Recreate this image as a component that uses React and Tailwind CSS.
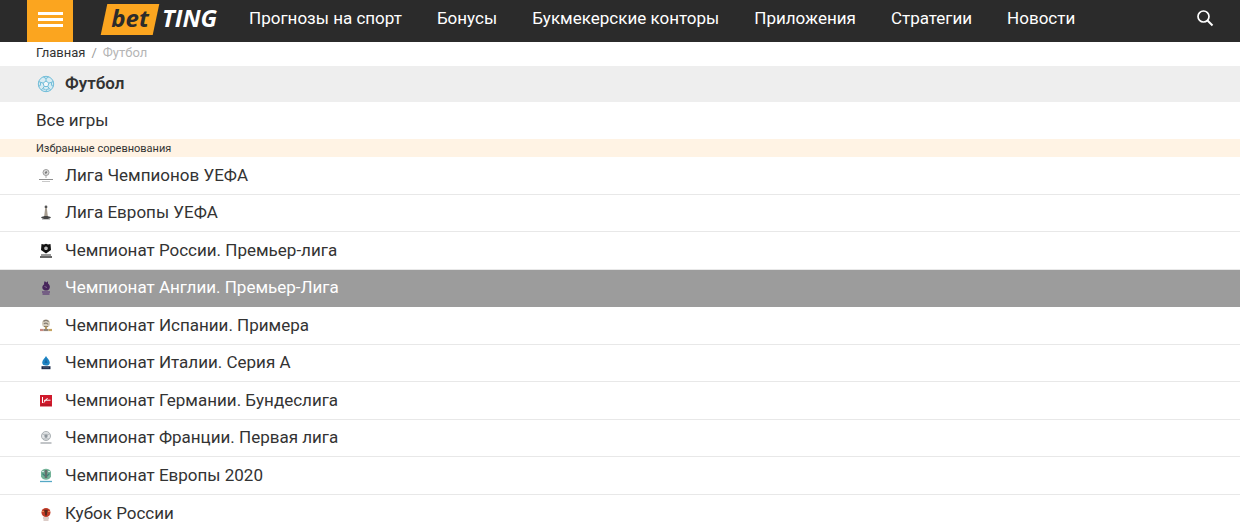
const navLinks = [
  'Прогнозы на спорт',
  'Бонусы',
  'Букмекерские конторы',
  'Приложения',
  'Стратегии',
  'Новости',
];

const ChampionsIcon = () => (
  <>
    <circle cx="8" cy="4.5" r="3" fill="#e0e0e0" stroke="#949494" strokeWidth="0.9" />
    <path d="M6.5 5 8 3l1.5 1L8 6z" fill="#777" />
    <path d="M8 7.5v2.5" stroke="#aaa" />
    <path d="M1 11.5h14" stroke="#8f8f8f" />
    <path d="M4 13.5h8" stroke="#c8c8c8" />
  </>
);

const EuropaIcon = () => (
  <>
    <circle cx="8" cy="2" r="1.4" fill="#555" />
    <path d="M7.2 3h1.6l1 8H6.2z" fill="#a69c8f" />
    <path d="M3 12.5c2-2 8-2 10 0-2 2-8 2-10 0z" fill="#444" />
    <path d="M4 14.5h8" stroke="#bbb" strokeWidth="0.8" />
  </>
);

const RussiaIcon = () => (
  <>
    <path d="M3.5 1 6 1.6 8 .8l2 .8 2.500-.6.5 6L8 10.500 3 7z" fill="#111" />
    <path d="m8 3.300 2 1.500-.8 2.200H6.800L6 4.800z" fill="#bbb" />
    <path d="M3 12h10" stroke="#555" strokeWidth="1.200" />
    <path d="M2 14h12" stroke="#333" strokeWidth="1.500" />
  </>
);

const EnglandIcon = () => (
  <>
    <path
      d="M6 3 6.800 1l1.400 1.400L10 1.200v2.300c1.700 1.200 2.200 3 1.700 4.500-.6 2-2 2.600-3.600 2.600S4.300 9.700 4.300 7.500C4.300 6 5 5 6.200 4.200z"
      fill="#46245a"
    />
    <path d="M6.500 6.500 9 7.500" stroke="#8d7a99" strokeWidth="0.8" />
    <path d="M4 12h8M4.500 14h7" stroke="#674b7c" strokeWidth="1.300" />
  </>
);

const SpainIcon = () => (
  <>
    <circle cx="8" cy="5.500" r="4" fill="#d5cdbd" />
    <path d="M5.500 3.500c1.500-1.800 4-1.500 5 .3M5.800 5.800c1.500-.8 3.500-.5 4.400.7M6 8.500h4" fill="none" stroke="#857c72" strokeWidth="1.200" />
    <path d="M8 8.500V11" stroke="#b9924f" strokeWidth="1.800" />
    <path d="M2 12h3.500" stroke="#c98a80" strokeWidth="2.200" />
    <path d="M5.500 12h5" stroke="#8f8479" strokeWidth="2.200" />
    <path d="M10.500 12H14" stroke="#c6a562" strokeWidth="2.200" />
  </>
);

const ItalyIcon = () => (
  <>
    <path d="M8 1c.8 2 3.800 4 3.800 6.500s-1.800 3-3.800 3-3.800-.6-3.800-3S7.200 3 8 1z" fill="#1d84c4" />
    <path d="M8 3.500 9.500 8h-3z" fill="#1765a3" />
    <path d="M3.500 11.200h9v3h-9z" fill="#1d2b49" />
    <path d="M5 12.700h6" stroke="#5f6d8a" strokeWidth="0.6" />
  </>
);

const GermanyIcon = () => (
  <>
    <path d="M2 2h12v11.500H2z" fill="#d01a2c" />
    <path d="M4.500 4v6" stroke="#fff" />
    <path d="m6 7.500 2-.5 1.500-2M7.500 7.200h5M7.500 7.500l-1.800 2.300" fill="none" stroke="#fff" />
    <path d="M3 12h10" stroke="#a01523" />
  </>
);

const FranceIcon = () => (
  <>
    <circle cx="8" cy="6" r="4.500" fill="#e4e6e8" stroke="#a3a9ad" strokeWidth="0.9" />
    <path d="m8 4.300 1.800 1.300-.7 2.100H6.900l-.7-2.100z" fill="#8d959b" />
    <path d="M4.500 4.300h7M5 8.900h6" stroke="#a3a9ad" strokeWidth="0.8" />
    <path d="M2.500 13h11" stroke="#a8adb0" strokeWidth="1.400" />
  </>
);

const EuroIcon = () => (
  <>
    <path d="M3 4a5.500 5.500 0 0 1 10 0v4.500a5.500 5.500 0 0 1-10 0z" fill="#74b398" />
    <path d="M8 2v8" stroke="#65706c" strokeWidth="2.500" />
    <path d="M4.500 5.500 7 8M11.500 5.500 9 8" stroke="#3d837a" strokeWidth="1.200" />
    <path d="M4 3.500h2M10 3.500h2" stroke="#d5e5e3" />
    <path d="M2 13.500h12" stroke="#55a8c5" strokeWidth="1.300" />
  </>
);

const CupIcon = () => (
  <>
    <circle cx="8" cy="6.500" r="4.500" fill="#c23a26" />
    <path d="M6.200 3.800h3.600L9 7.500v2H7v-2z" fill="#57281b" />
    <path d="M4.300 5.500h1.500M10.200 5.500h1.500" stroke="#eba05e" />
    <path d="M5 12h6M5.500 14h5" stroke="#b9998f" strokeWidth="1.200" />
  </>
);

const competitions = [
  { name: 'Лига Чемпионов УЕФА', icon: ChampionsIcon },
  { name: 'Лига Европы УЕФА', icon: EuropaIcon },
  { name: 'Чемпионат России. Премьер-лига', icon: RussiaIcon },
  { name: 'Чемпионат Англии. Премьер-Лига', icon: EnglandIcon, active: true },
  { name: 'Чемпионат Испании. Примера', icon: SpainIcon },
  { name: 'Чемпионат Италии. Серия А', icon: ItalyIcon },
  { name: 'Чемпионат Германии. Бундеслига', icon: GermanyIcon },
  { name: 'Чемпионат Франции. Первая лига', icon: FranceIcon },
  { name: 'Чемпионат Европы 2020', icon: EuroIcon },
  { name: 'Кубок России', icon: CupIcon },
];

const Logo = () => (
  <a
    href="#"
    className="ml-7 flex h-[31px] items-center font-['Open_Sans',sans-serif] text-2xl leading-none font-bold italic"
  >
    <span className="relative isolate flex h-full w-[58px] items-center justify-center pb-[2px] text-[#2b2b2b] before:absolute before:inset-y-0 before:inset-x-[3px] before:-z-10 before:-skew-x-12 before:bg-[#fba51f]">
      bet
    </span>
    <span className="ml-[3px] pb-[2px] text-white">TING</span>
  </a>
);

const Header = () => (
  <header className="flex h-[42px] items-center bg-[#2b2b2b] pr-[25px] pb-1 pl-[27px] text-white">
    <button
      type="button"
      aria-label="Меню"
      className="-mb-1 flex h-[42px] w-[46px] flex-col items-center justify-center gap-[3px] bg-[#fba51f] pb-1"
    >
      <span className="h-[3px] w-[25px] bg-white" />
      <span className="h-[3px] w-[25px] bg-white" />
      <span className="h-[3px] w-[25px] bg-white" />
    </button>
    <Logo />
    <nav className="ml-8 flex items-center gap-[35px] text-[17px] whitespace-nowrap">
      {navLinks.map((label) => (
        <a key={label} href="#">
          {label}
        </a>
      ))}
    </nav>
    <button type="button" aria-label="Поиск" className="ml-auto p-px">
      <svg viewBox="0 0 18 18" className="size-[18px]" fill="none" stroke="#fff" strokeWidth="1.7">
        <circle cx="7.500" cy="6.500" r="5.500" />
        <path d="m11.500 10.500 5 5" strokeWidth="2" />
      </svg>
    </button>
  </header>
);

const BallIcon = () => (
  <svg viewBox="0 0 18 18" className="size-[18px]" fill="none" stroke="#6fbcd8" strokeWidth="1">
    <circle cx="9" cy="9" r="7.700" fill="#d8ecf3" />
    <path d="m9 6 2.900 2.100-1.100 3.400H7.200L6.100 8.100z" fill="#f4f8fa" />
    <path d="M9 6V3.500M11.900 8.100l2.500-.8M10.800 11.500l1.500 2.200M7.200 11.500l-1.500 2.200M6.100 8.100l-2.500-.8" />
    <path d="m6.300 2 2.700 1.500L11.700 2M16.300 6.500l-1.900.8.3 3.200 1.500.7M13.800 15l-1.500-1.300-2.800.8-.5 2M4.200 15l1.500-1.300 2.800.8M1.700 6.500l1.900.8-.3 3.200-1.500.7" />
  </svg>
);

export default function App() {
  return (
    <div className="bg-white font-[Roboto,sans-serif] text-[17px] text-[#333]">
      <Header />
      <nav aria-label="Навигация" className="flex h-6 items-center gap-[6px] pb-[2px] pl-9 text-[13px]">
        <a href="#">Главная</a>
        <span className="text-[#999]">/</span>
        <span className="text-[#b5b5b5]">Футбол</span>
      </nav>
      <main>
        <h1 className="flex h-9 items-center gap-[10px] bg-[#eee] pl-[37px] font-semibold">
          <BallIcon />
          Футбол
        </h1>
        <a href="#" className="flex h-[37px] items-center pl-9">
          Все игры
        </a>
        <h2 className="flex h-[18px] items-center bg-[#fff3e4] pt-[2px] pl-9 text-[11px]">Избранные соревнования</h2>
        <ul>
          {competitions.map(({ name, icon: Icon, active }) => (
            <li
              key={name}
              className={`border-b odd:h-[38px] even:h-[37px] last:border-0 ${
                active ? 'border-[#9c9c9c] bg-[#9c9c9c] text-white' : 'border-[#e8e8e8]'
              }`}
            >
              <a href="#" className="flex h-full items-center gap-[11px] pl-[38px]">
                <svg viewBox="0 0 16 16" className="size-4">
                  <Icon />
                </svg>
                {name}
              </a>
            </li>
          ))}
        </ul>
      </main>
    </div>
  );
}
